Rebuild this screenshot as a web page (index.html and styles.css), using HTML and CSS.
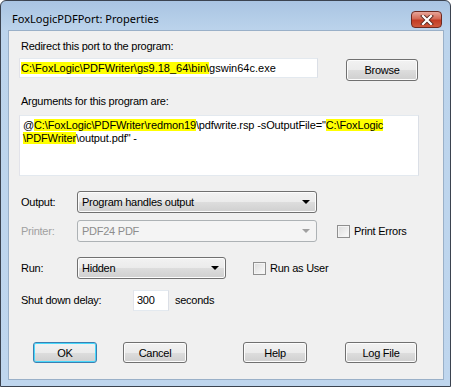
FILE: index.html
```html
<!DOCTYPE html>
<html lang="en">
<head>
  <meta charset="UTF-8" />
  <title>FoxLogicPDFPort: Properties</title>
  <link rel="stylesheet" href="styles.css">
</head>
<body>
  <div class="window">
    <div class="titlebar">
      <span class="title">FoxLogicPDFPort: Properties</span>
      <div class="close">
        <svg width="16" height="10" viewBox="0 0 16 10">
          <path d="M4 1 L12 9 M12 1 L4 9" stroke="#5a2a22" stroke-width="4" stroke-linecap="square" />
          <path d="M4 1 L12 9 M12 1 L4 9" stroke="#ffffff" stroke-width="2.2" stroke-linecap="square" />
        </svg>
      </div>
    </div>

    <div class="client">
      <div class="label first">Redirect this port to the program:</div>
      <div class="row program-row">
        <div class="field program"><span class="hl">C:\FoxLogic\PDFWriter\gs9.18_64\bin\</span>gswin64c.exe</div>
        <button class="btn browse">Browse</button>
      </div>

      <div class="label args-label">Arguments for this program are:</div>
      <div class="field args">@<span class="hl">C:\FoxLogic\PDFWriter\redmon19</span>\pdfwrite.rsp -sOutputFile="<span class="hl">C:\FoxLogic</span><br><span class="hl">\PDFWriter</span>\output.pdf" -</div>

      <!-- Output / printer / run -->
      <div class="row option-row output-row">
        <span class="row-label">Output:</span>
        <div class="combo wide">Program handles output<span class="arrow"></span></div>
      </div>

      <div class="row option-row printer-row">
        <span class="row-label disabled">Printer:</span>
        <div class="combo wide disabled">PDF24 PDF<span class="arrow"></span></div>
        <label class="check print-errors"><span class="box"></span>Print Errors</label>
      </div>

      <div class="row option-row run-row">
        <span class="row-label">Run:</span>
        <div class="combo narrow">Hidden<span class="arrow"></span></div>
        <label class="check run-user"><span class="box"></span>Run as User</label>
      </div>

      <div class="row option-row delay-row">
        <span class="row-label delay-label">Shut down delay:</span>
        <div class="field delay">300</div>
        <span class="unit">seconds</span>
      </div>

      <div class="row buttons">
        <button class="btn default">OK</button>
        <button class="btn cancel">Cancel</button>
        <button class="btn help">Help</button>
        <button class="btn logfile">Log File</button>
      </div>
    </div>
  </div>
</body>
</html>
```

FILE: styles.css
```css
body {
  margin: 0;
  background: #ffffff;
}

.window {
  width: 451px;
  height: 387px;
  box-sizing: border-box;
  border: 1px solid #3b4350;
  border-radius: 6px 6px 0 0;
  background: linear-gradient(#a9c4e2, #bcd4ec 30px, #bfd6ee);
  display: flex;
  flex-direction: column;
  padding: 0 6px 6px 7px;
  font-family: "Liberation Sans", Arial, sans-serif;
  font-size: 11px;
  letter-spacing: -0.25px;
  color: #000;
}

.titlebar {
  height: 29px;
  display: flex;
  align-items: flex-start;
  justify-content: space-between;
}

.title {
  font-family: "Noto Sans", sans-serif;
  font-size: 11px;
  letter-spacing: 0;
  margin: 10px 0 0 4px;
  color: #000;
}

.close {
  width: 29px;
  height: 15px;
  margin: 10px 2px 0 0;
  border: 1px solid #6e2a20;
  border-radius: 4px;
  background: linear-gradient(#e7a69a, #d46a55 45%, #c23b24 55%, #cf5a3e);
  display: flex;
  align-items: center;
  justify-content: center;
}

.client {
  flex: 1;
  background: #f0f0f0;
  border: 1px solid #9ab0c8;
  padding: 0 9px 0 10px;
  display: flex;
  flex-direction: column;
}

.label {
  line-height: 13px;
  padding-left: 2px;
}

.label.first {
  margin-top: 9px;
}

.row {
  display: flex;
  align-items: center;
}

.program-row {
  margin-top: 5px;
  justify-content: space-between;
  align-items: flex-start;
}

.field {
  background: #fff;
  border: 1px solid #abadb3;
  border-top-color: #e3e9ef;
  border-left-color: #e2e3ea;
  border-right-color: #dbdfe6;
  border-bottom-color: #e3e9ef;
  box-sizing: border-box;
  white-space: nowrap;
}

.field.program {
  width: 299px;
  height: 20px;
  line-height: 18px;
  padding-left: 1px;
  letter-spacing: 0;
}

.hl {
  background: #ffff00;
}

.btn {
  font-family: "Liberation Sans", Arial, sans-serif;
  font-size: 11px;
  letter-spacing: -0.25px;
  color: #000;
  height: 21px;
  padding: 0;
  border: 1px solid #707070;
  border-radius: 3px;
  background: linear-gradient(#f2f2f2, #ebebeb 50%, #dddddd 51%, #cfcfcf);
  box-shadow: inset 0 0 0 1px #fcfcfc;
}

.browse {
  width: 72px;
  height: 22px;
  margin: 1px 16px 0 0;
}

.args-label {
  margin-top: 14px;
}

.field.args {
  width: 400px;
  height: 61px;
  margin-top: 7px;
  padding: 3px 3px;
  line-height: 13px;
  letter-spacing: -0.12px;
}

.option-row {
  height: 22px;
}

.output-row {
  margin-top: 15px;
}

.printer-row {
  margin-top: 7px;
}

.run-row {
  margin-top: 15px;
}

.delay-row {
  margin-top: 10px;
}

.row-label {
  width: 56px;
  padding-left: 2px;
}

.row-label.disabled {
  color: #a0a0a0;
}

.combo {
  position: relative;
  box-sizing: border-box;
  height: 22px;
  line-height: 20px;
  padding-left: 4px;
  border: 1px solid #707070;
  border-radius: 3px;
  background: linear-gradient(#f2f2f2, #ebebeb 50%, #dddddd 51%, #cfcfcf);
  box-shadow: inset 0 0 0 1px #fcfcfc;
}

.combo.wide {
  width: 240px;
}

.combo.narrow {
  width: 149px;
}

.combo.disabled {
  color: #8d8d8d;
  border-color: #adb2b5;
  background: #f4f4f4;
  box-shadow: none;
}

.arrow {
  position: absolute;
  right: 6px;
  top: 8px;
  border-left: 4px solid transparent;
  border-right: 4px solid transparent;
  border-top: 4px solid #000;
}

.combo.disabled .arrow {
  border-top-color: #a0a0a0;
}

.check {
  display: flex;
  align-items: center;
}

.box {
  width: 11px;
  height: 11px;
  border: 1px solid #8f8f8f;
  background: linear-gradient(135deg, #dcdcdc, #fbfbfb);
  box-shadow: inset 0 0 0 1px #f4f4f4;
  margin-right: 4px;
}

.print-errors {
  margin-left: 20px;
}

.run-user {
  margin-left: 27px;
}

.delay-label {
  width: 112px;
}

.field.delay {
  width: 36px;
  height: 21px;
  line-height: 19px;
  padding-left: 3px;
}

.unit {
  margin-left: 6px;
}

.buttons {
  margin-top: 31px;
  align-items: flex-start;
}

.buttons .btn {
  width: 64px;
}

.btn.default {
  margin-left: 14px;
  border-color: #3c7fb1;
  box-shadow: inset 0 0 0 1px #48d8fb;
}

.btn.cancel {
  margin-left: 26px;
}

.btn.help {
  margin-left: 56px;
}

.btn.logfile {
  width: 72px;
  margin-left: 38px;
}
```
